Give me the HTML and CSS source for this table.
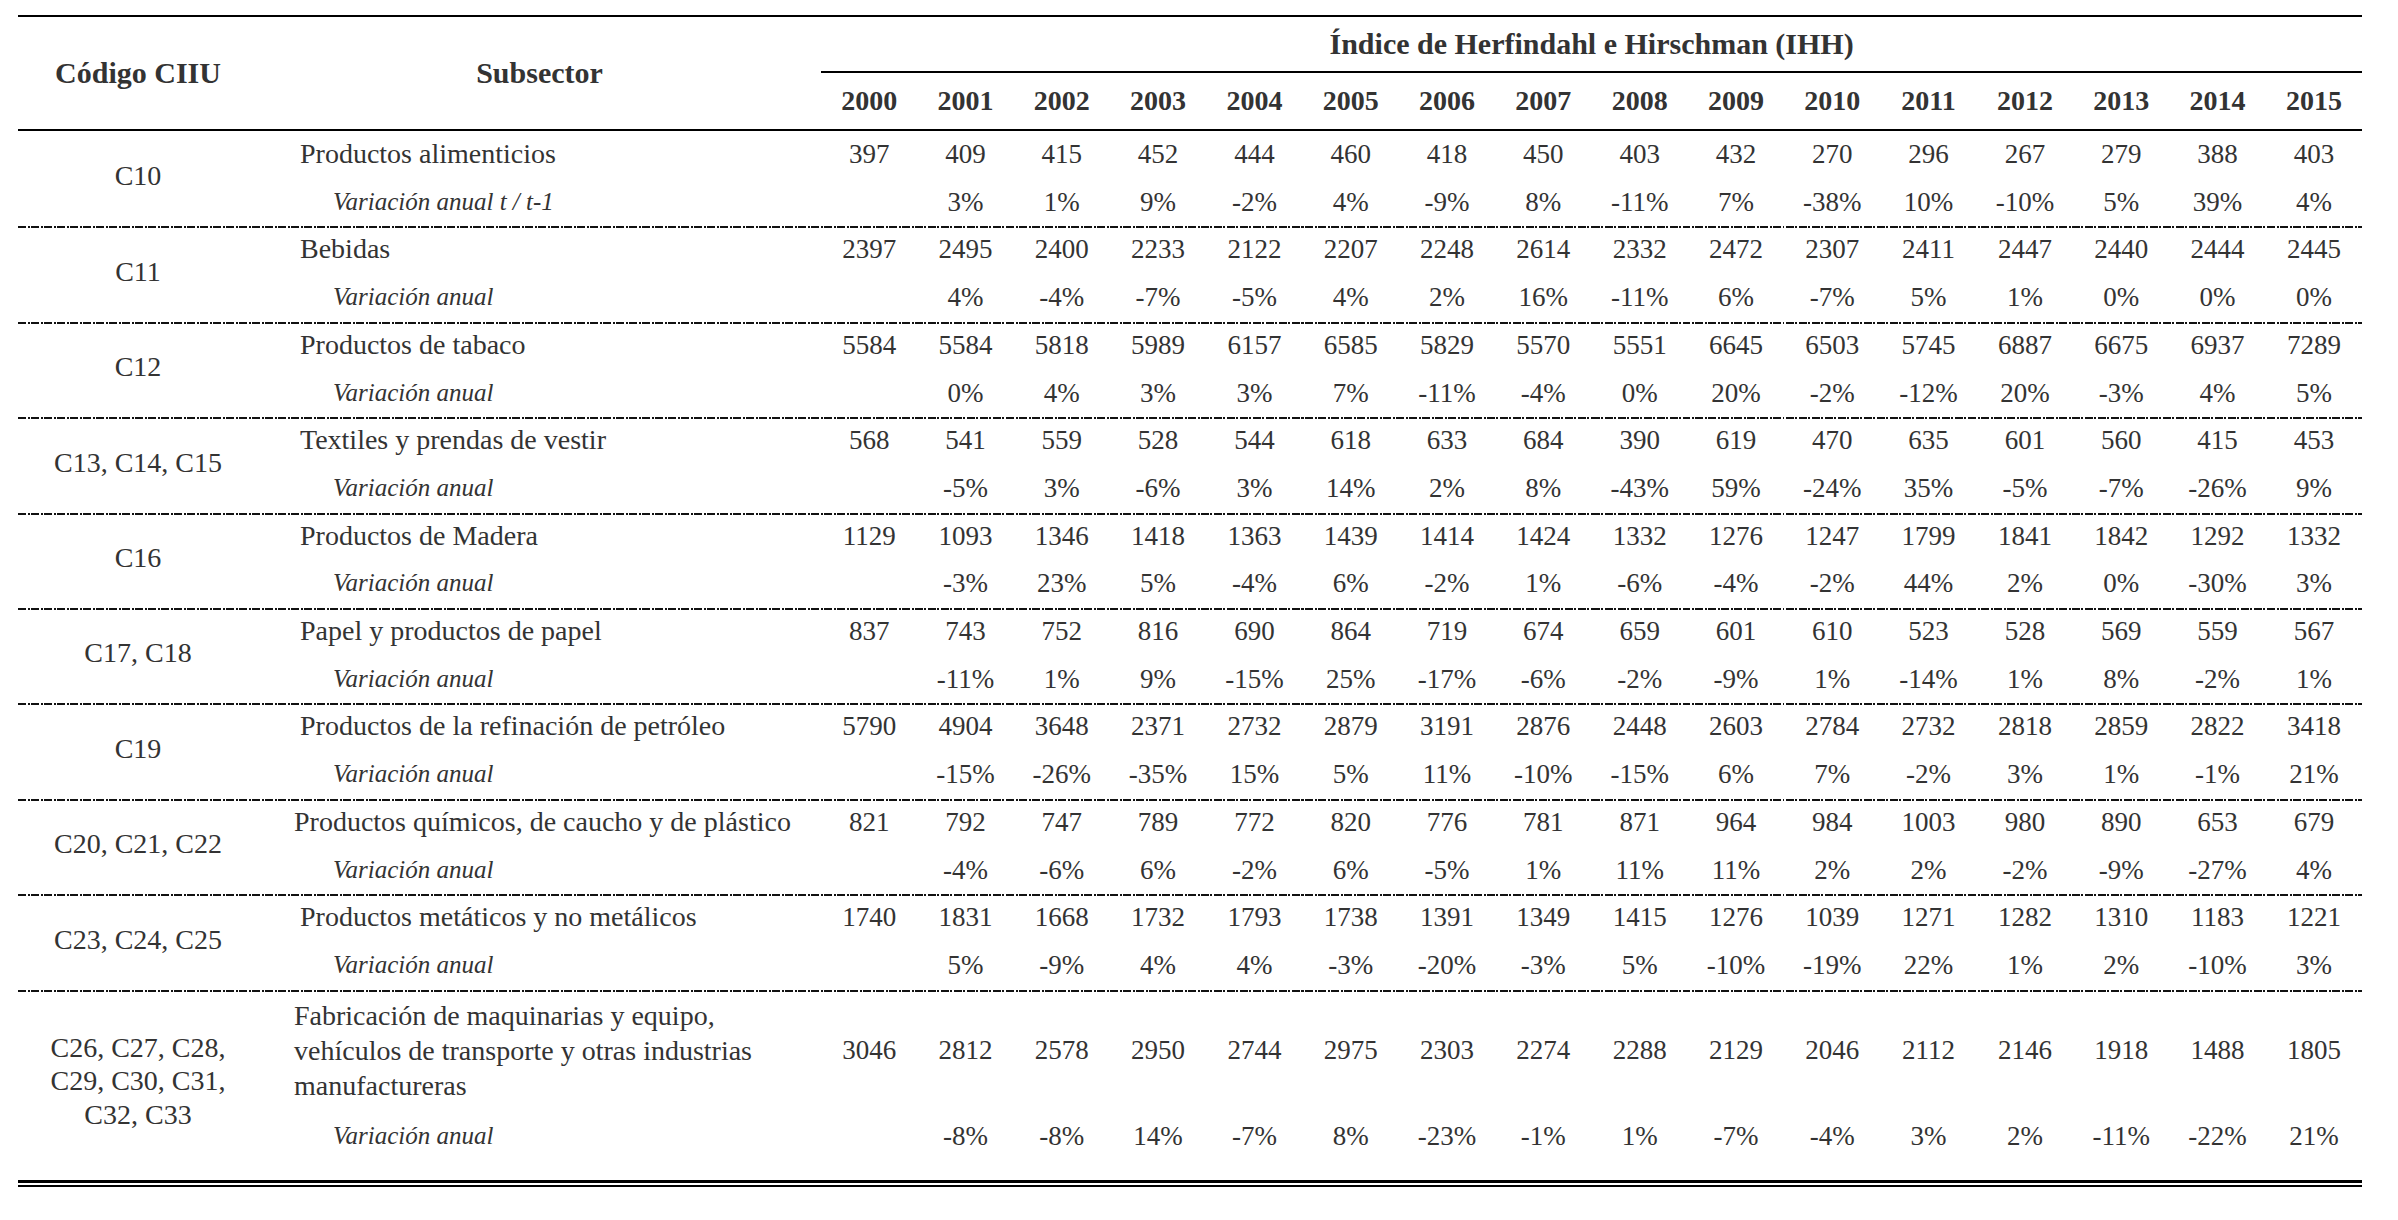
FILE: index.html
```html
<!DOCTYPE html>
<html lang="es">
<head>
    <meta charset="UTF-8">
    <title>Índice de Herfindahl e Hirschman por subsector</title>
    <link rel="stylesheet" href="styles.css">
</head>
<body>
    <div class="table-wrap">
        <table class="ihh-table">
            <colgroup>
                <col class="col-code">
                <col class="col-sub">
                <col span="16" class="col-year">
            </colgroup>
            <thead>
                <tr class="head-top">
                    <th rowspan="2" class="h-code">Código CIIU</th>
                    <th rowspan="2" class="h-sub">Subsector</th>
                    <th colspan="16" class="h-ihh">Índice de Herfindahl e Hirschman (IHH)</th>
                </tr>
                <tr class="head-years">
                    <th>2000</th><th>2001</th><th>2002</th><th>2003</th><th>2004</th><th>2005</th><th>2006</th><th>2007</th>
                    <th>2008</th><th>2009</th><th>2010</th><th>2011</th><th>2012</th><th>2013</th><th>2014</th><th>2015</th>
                </tr>
            </thead>
            <tbody>
                <tr class="val first">
                    <td rowspan="2" class="code">C10</td>
                    <td class="sub">Productos alimenticios</td>
                    <td>397</td><td>409</td><td>415</td><td>452</td><td>444</td><td>460</td><td>418</td><td>450</td>
                    <td>403</td><td>432</td><td>270</td><td>296</td><td>267</td><td>279</td><td>388</td><td>403</td>
                </tr>
                <tr class="var">
                    <td class="sub"><em>Variación anual t / t-1</em></td>
                    <td></td><td>3%</td><td>1%</td><td>9%</td><td>-2%</td><td>4%</td><td>-9%</td><td>8%</td>
                    <td>-11%</td><td>7%</td><td>-38%</td><td>10%</td><td>-10%</td><td>5%</td><td>39%</td><td>4%</td>
                </tr>
            </tbody>
            <tbody>
                <tr class="val">
                    <td rowspan="2" class="code">C11</td>
                    <td class="sub">Bebidas</td>
                    <td>2397</td><td>2495</td><td>2400</td><td>2233</td><td>2122</td><td>2207</td><td>2248</td><td>2614</td>
                    <td>2332</td><td>2472</td><td>2307</td><td>2411</td><td>2447</td><td>2440</td><td>2444</td><td>2445</td>
                </tr>
                <tr class="var">
                    <td class="sub"><em>Variación anual</em></td>
                    <td></td><td>4%</td><td>-4%</td><td>-7%</td><td>-5%</td><td>4%</td><td>2%</td><td>16%</td>
                    <td>-11%</td><td>6%</td><td>-7%</td><td>5%</td><td>1%</td><td>0%</td><td>0%</td><td>0%</td>
                </tr>
            </tbody>
            <tbody>
                <tr class="val">
                    <td rowspan="2" class="code">C12</td>
                    <td class="sub">Productos de tabaco</td>
                    <td>5584</td><td>5584</td><td>5818</td><td>5989</td><td>6157</td><td>6585</td><td>5829</td><td>5570</td>
                    <td>5551</td><td>6645</td><td>6503</td><td>5745</td><td>6887</td><td>6675</td><td>6937</td><td>7289</td>
                </tr>
                <tr class="var">
                    <td class="sub"><em>Variación anual</em></td>
                    <td></td><td>0%</td><td>4%</td><td>3%</td><td>3%</td><td>7%</td><td>-11%</td><td>-4%</td>
                    <td>0%</td><td>20%</td><td>-2%</td><td>-12%</td><td>20%</td><td>-3%</td><td>4%</td><td>5%</td>
                </tr>
            </tbody>
            <tbody>
                <tr class="val">
                    <td rowspan="2" class="code">C13, C14, C15</td>
                    <td class="sub">Textiles y prendas de vestir</td>
                    <td>568</td><td>541</td><td>559</td><td>528</td><td>544</td><td>618</td><td>633</td><td>684</td>
                    <td>390</td><td>619</td><td>470</td><td>635</td><td>601</td><td>560</td><td>415</td><td>453</td>
                </tr>
                <tr class="var">
                    <td class="sub"><em>Variación anual</em></td>
                    <td></td><td>-5%</td><td>3%</td><td>-6%</td><td>3%</td><td>14%</td><td>2%</td><td>8%</td>
                    <td>-43%</td><td>59%</td><td>-24%</td><td>35%</td><td>-5%</td><td>-7%</td><td>-26%</td><td>9%</td>
                </tr>
            </tbody>
            <tbody>
                <tr class="val">
                    <td rowspan="2" class="code">C16</td>
                    <td class="sub">Productos de Madera</td>
                    <td>1129</td><td>1093</td><td>1346</td><td>1418</td><td>1363</td><td>1439</td><td>1414</td><td>1424</td>
                    <td>1332</td><td>1276</td><td>1247</td><td>1799</td><td>1841</td><td>1842</td><td>1292</td><td>1332</td>
                </tr>
                <tr class="var">
                    <td class="sub"><em>Variación anual</em></td>
                    <td></td><td>-3%</td><td>23%</td><td>5%</td><td>-4%</td><td>6%</td><td>-2%</td><td>1%</td>
                    <td>-6%</td><td>-4%</td><td>-2%</td><td>44%</td><td>2%</td><td>0%</td><td>-30%</td><td>3%</td>
                </tr>
            </tbody>
            <tbody>
                <tr class="val">
                    <td rowspan="2" class="code">C17, C18</td>
                    <td class="sub">Papel y productos de papel</td>
                    <td>837</td><td>743</td><td>752</td><td>816</td><td>690</td><td>864</td><td>719</td><td>674</td>
                    <td>659</td><td>601</td><td>610</td><td>523</td><td>528</td><td>569</td><td>559</td><td>567</td>
                </tr>
                <tr class="var">
                    <td class="sub"><em>Variación anual</em></td>
                    <td></td><td>-11%</td><td>1%</td><td>9%</td><td>-15%</td><td>25%</td><td>-17%</td><td>-6%</td>
                    <td>-2%</td><td>-9%</td><td>1%</td><td>-14%</td><td>1%</td><td>8%</td><td>-2%</td><td>1%</td>
                </tr>
            </tbody>
            <tbody>
                <tr class="val">
                    <td rowspan="2" class="code">C19</td>
                    <td class="sub">Productos de la refinación de petróleo</td>
                    <td>5790</td><td>4904</td><td>3648</td><td>2371</td><td>2732</td><td>2879</td><td>3191</td><td>2876</td>
                    <td>2448</td><td>2603</td><td>2784</td><td>2732</td><td>2818</td><td>2859</td><td>2822</td><td>3418</td>
                </tr>
                <tr class="var">
                    <td class="sub"><em>Variación anual</em></td>
                    <td></td><td>-15%</td><td>-26%</td><td>-35%</td><td>15%</td><td>5%</td><td>11%</td><td>-10%</td>
                    <td>-15%</td><td>6%</td><td>7%</td><td>-2%</td><td>3%</td><td>1%</td><td>-1%</td><td>21%</td>
                </tr>
            </tbody>
            <tbody>
                <tr class="val">
                    <td rowspan="2" class="code">C20, C21, C22</td>
                    <td class="sub sub-wide">Productos químicos, de caucho y de plástico</td>
                    <td>821</td><td>792</td><td>747</td><td>789</td><td>772</td><td>820</td><td>776</td><td>781</td>
                    <td>871</td><td>964</td><td>984</td><td>1003</td><td>980</td><td>890</td><td>653</td><td>679</td>
                </tr>
                <tr class="var">
                    <td class="sub"><em>Variación anual</em></td>
                    <td></td><td>-4%</td><td>-6%</td><td>6%</td><td>-2%</td><td>6%</td><td>-5%</td><td>1%</td>
                    <td>11%</td><td>11%</td><td>2%</td><td>2%</td><td>-2%</td><td>-9%</td><td>-27%</td><td>4%</td>
                </tr>
            </tbody>
            <tbody>
                <tr class="val">
                    <td rowspan="2" class="code">C23, C24, C25</td>
                    <td class="sub">Productos metáticos y no metálicos</td>
                    <td>1740</td><td>1831</td><td>1668</td><td>1732</td><td>1793</td><td>1738</td><td>1391</td><td>1349</td>
                    <td>1415</td><td>1276</td><td>1039</td><td>1271</td><td>1282</td><td>1310</td><td>1183</td><td>1221</td>
                </tr>
                <tr class="var">
                    <td class="sub"><em>Variación anual</em></td>
                    <td></td><td>5%</td><td>-9%</td><td>4%</td><td>4%</td><td>-3%</td><td>-20%</td><td>-3%</td>
                    <td>5%</td><td>-10%</td><td>-19%</td><td>22%</td><td>1%</td><td>2%</td><td>-10%</td><td>3%</td>
                </tr>
            </tbody>
            <tbody class="last">
                <tr class="val">
                    <td rowspan="2" class="code code-multi">C26, C27, C28,<br>C29, C30, C31,<br>C32, C33</td>
                    <td class="sub sub-wide sub-multi">Fabricación de maquinarias y equipo,<br>vehículos de transporte y otras industrias<br>manufactureras</td>
                    <td>3046</td><td>2812</td><td>2578</td><td>2950</td><td>2744</td><td>2975</td><td>2303</td><td>2274</td>
                    <td>2288</td><td>2129</td><td>2046</td><td>2112</td><td>2146</td><td>1918</td><td>1488</td><td>1805</td>
                </tr>
                <tr class="var">
                    <td class="sub"><em>Variación anual</em></td>
                    <td></td><td>-8%</td><td>-8%</td><td>14%</td><td>-7%</td><td>8%</td><td>-23%</td><td>-1%</td>
                    <td>1%</td><td>-7%</td><td>-4%</td><td>3%</td><td>2%</td><td>-11%</td><td>-22%</td><td>21%</td>
                </tr>
            </tbody>
        </table>
    </div>
</body>
</html>
```

FILE: styles.css
```css
body {
    margin: 0;
    padding: 15px 0 0 18px;
    background: #fff;
    color: #333;
    font-family: "Liberation Serif", "Times New Roman", serif;
}
.table-wrap {
    width: 2344px;
    border-bottom: 2px solid #000;
    padding-bottom: 2px;
}
.ihh-table {
    width: 2344px;
    table-layout: fixed;
    border-collapse: collapse;
    border-top: 2px solid #000;
}
.col-code { width: 240px; }
.col-sub { width: 563px; }
.col-year { width: 96.3125px; }

/* header */
.ihh-table th {
    font-weight: bold;
    text-align: center;
    padding: 0;
    white-space: nowrap;
}
.h-code,
.h-sub {
    font-size: 30px;
    vertical-align: middle;
}
.h-ihh {
    font-size: 30px;
    height: 54px;
    border-bottom: 2px solid #000;
}
.head-years th {
    font-size: 28px;
    height: 56px;
    border-bottom: 2px solid #000;
}
.head-top th.h-code,
.head-top th.h-sub {
    border-bottom: 2px solid #000;
}

/* body rows */
.ihh-table td {
    font-size: 27px;
    text-align: center;
    padding: 4px 0 5px;
    line-height: 38.7px;
    white-space: nowrap;
    vertical-align: top;
}
tbody + tbody tr.val {
    background: repeating-linear-gradient(90deg, #111 0 8px, transparent 8px 9.5px, #111 9.5px 11.5px, transparent 11.5px 13px) left top / 100% 2px no-repeat;
}
.ihh-table td.code {
    font-size: 28px;
    vertical-align: middle;
    padding: 0 0 4px;
}
.ihh-table td.sub {
    font-size: 28px;
    text-align: left;
    padding-left: 42px;
}
.ihh-table td.sub-wide { padding-left: 36px; }
.ihh-table .var td.sub {
    font-size: 25px;
    padding-left: 75px;
}
.var em { font-style: italic; }

/* last group: three-line subsector */
.last .val td {
    vertical-align: middle;
    padding-top: 8px;
    padding-bottom: 8px;
}
.ihh-table .last td.sub-multi {
    line-height: 35px;
    vertical-align: top;
}
.ihh-table .last td.code-multi {
    line-height: 33.5px;
    padding: 0 0 8px;
    border-bottom: 3px solid #000;
}
.ihh-table .last .var td {
    padding-top: 6px;
    padding-bottom: 25px;
    border-bottom: 3px solid #000;
}
```
